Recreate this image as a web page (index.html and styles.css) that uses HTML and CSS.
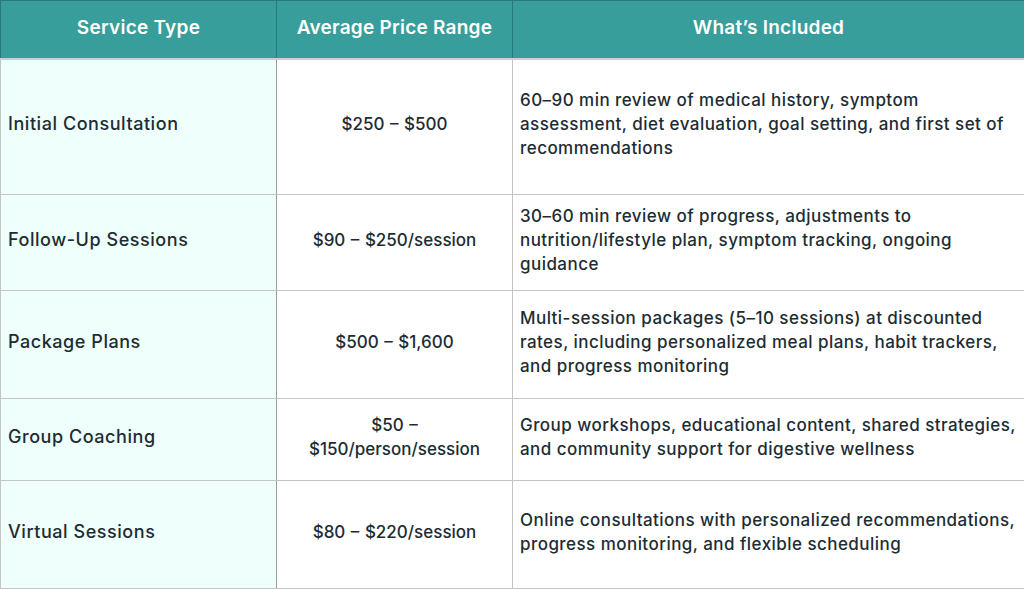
FILE: index.html
```html
<!DOCTYPE html>
<html>
<head>
<meta charset="utf-8">
<link rel="stylesheet" href="styles.css">
</head>
<body>
<table class="pricing">
  <colgroup>
    <col class="col-type">
    <col class="col-price">
    <col class="col-inc">
  </colgroup>
  <thead>
    <tr class="head-row">
      <th>Service Type</th>
      <th>Average Price Range</th>
      <th>What’s Included</th>
    </tr>
  </thead>
  <tbody>
    <tr class="row-1">
      <td class="type">Initial Consultation</td>
      <td class="price">$250 – $500</td>
      <td class="inc">60–90 min review of medical history, symptom assessment, diet evaluation, goal setting, and first set of recommendations</td>
    </tr>
    <tr class="row-2">
      <td class="type">Follow-Up Sessions</td>
      <td class="price">$90 – $250/session</td>
      <td class="inc">30–60 min review of progress, adjustments to nutrition/lifestyle plan, symptom tracking, ongoing guidance</td>
    </tr>
    <tr class="row-3">
      <td class="type">Package Plans</td>
      <td class="price">$500 – $1,600</td>
      <td class="inc">Multi-session packages (5–10 sessions) at discounted rates, including personalized meal plans, habit trackers, and progress monitoring</td>
    </tr>
    <tr class="row-4">
      <td class="type">Group Coaching</td>
      <td class="price">$50 –<br>$150/person/session</td>
      <td class="inc">Group workshops, educational content, shared strategies, and community support for digestive wellness</td>
    </tr>
    <tr class="row-5">
      <td class="type">Virtual Sessions</td>
      <td class="price">$80 – $220/session</td>
      <td class="inc">Online consultations with personalized recommendations, progress monitoring, and flexible scheduling</td>
    </tr>
  </tbody>
</table>
</body>
</html>
```
FILE: styles.css
```css
html, body {
  margin: 0;
  padding: 0;
  background: #ffffff;
}
body {
  font-family: Inter, "Open Sans", "Liberation Sans", sans-serif;
  color: #1d2c33;
}
.pricing {
  width: 1024px;
  border-collapse: collapse;
  table-layout: fixed;
}
.col-type { width: 276px; }
.col-price { width: 236px; }
.col-inc { width: 512px; }
.head-row {
  height: 58px;
}
.head-row th {
  background: #389e9c;
  color: #ffffff;
  font-weight: 600;
  font-size: 19px;
  letter-spacing: 0.25px;
  text-align: center;
  border-top: 1px solid #2a7b78;
  border-left: 1px solid #2a7b78;
  border-right: 1px solid #2a7b78;
  border-bottom: 2px solid #c9d0cf;
  padding: 0 4px 3px;
}
td {
  border: 1px solid #c4c4c4;
  font-size: 17px;
  font-weight: 500;
  line-height: 24px;
  vertical-align: middle;
  padding: 0 7px 5px;
}
td.type {
  background: #effffc;
  border-right-color: #9a9a9a;
  font-size: 18px;
  letter-spacing: 0.55px;
  padding-left: 7px;
}
td.price {
  text-align: center;
  padding-left: 4px;
  padding-right: 4px;
  word-spacing: 1px;
}
td.inc {
  letter-spacing: 0.45px;
  padding-right: 1px;
}
.row-1 { height: 136px; }
.row-2 { height: 96px; }
.row-3 { height: 108px; }
.row-4 { height: 82px; }
.row-5 { height: 108px; }
```
